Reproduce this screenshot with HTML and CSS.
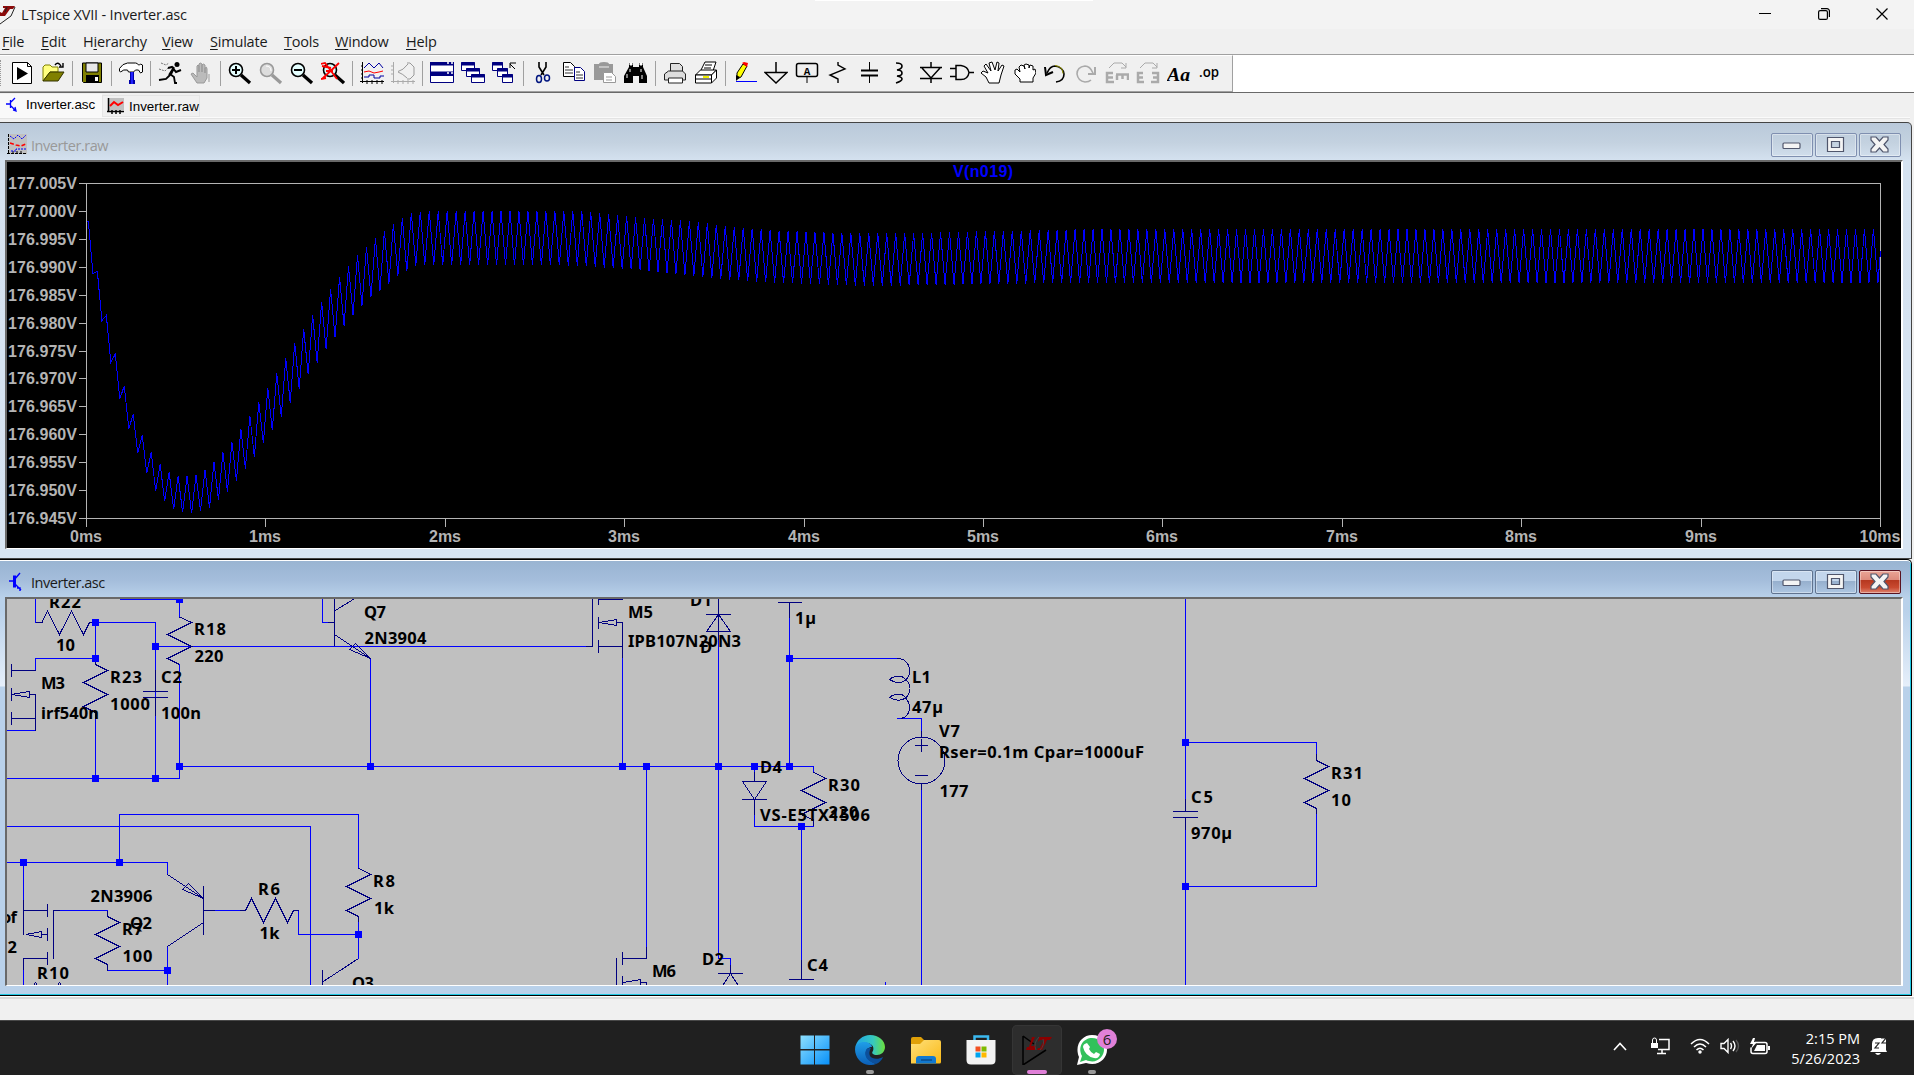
FILE: index.html
```html
<!DOCTYPE html>
<html lang="en">
<head>
<meta charset="utf-8">
<title>LTspice XVII - Inverter.asc</title>
<link rel="stylesheet" href="styles.css">
</head>
<body>
<header class="titlebar">
  <svg class="app-logo" width="17" height="22" viewBox="0 0 17 22"><path d="M3 3h12l-2 3h-3l-5 7H0V9l2 1 3-5H3z" fill="#8b0a0a"/><path d="M7 4 5 9M15 4l-4 9-11 8" fill="none" stroke="#222" stroke-width="1"/></svg>
  <span class="title-text">LTspice XVII - Inverter.asc</span>
  <div class="window-controls">
    <svg width="12" height="12" viewBox="0 0 12 12"><path d="M0 5.5h12" stroke="#000"/></svg>
    <svg width="12" height="12" viewBox="0 0 12 12" fill="none" stroke="#000" stroke-width="1.2"><rect x=".6" y="2.6" width="8.8" height="8.8" rx="1.5"/><path d="M3 .6h6a2.4 2.4 0 0 1 2.4 2.4v6"/></svg>
    <svg width="12" height="12" viewBox="0 0 12 12"><path d="M.5.5l11 11M11.5.5l-11 11" stroke="#000" stroke-width="1.2"/></svg>
  </div>
</header>
<nav class="menubar">
  <span><u>F</u>ile</span><span><u>E</u>dit</span><span>H<u>i</u>erarchy</span><span><u>V</u>iew</span><span><u>S</u>imulate</span><span><u>T</u>ools</span><span><u>W</u>indow</span><span><u>H</u>elp</span>
</nav>
<div class="toolbar-row">
  <div class="toolbar">
    <button><svg viewBox="0 0 24 24"><path d="M2.500 1.500h15l4 4v17h-19z" fill="#fff" stroke="#000"/><path d="M17.500 1.500v4h4" fill="none" stroke="#000"/><path d="M7 6v13l11-6.500z"/></svg></button>
    <button><svg viewBox="0 0 24 24"><path d="M2 20V6l2-2h5l2 2h6v5H9z" fill="#ffff80" stroke="#808000"/><path d="M2 20 9 11h14l-6 9z" fill="#808000" stroke="#333300"/><path d="M14 4q3-4 6 1M22 2v4h-4" fill="none" stroke="#000" stroke-width="1.400"/></svg></button>
    <i></i>
    <button><svg viewBox="0 0 24 24"><path d="M2.500 2h19v19.500h-18l-1-1z" fill="#808000" stroke="#000"/><path d="M6 2h12v9H6z" fill="#e8e8e8" stroke="#000"/><path d="M6 14h13v7H6z"/><path d="M15 16h3v4h-3z" fill="#fff"/></svg></button>
    <i></i>
    <button><svg viewBox="0 0 24 24"><path d="M.5 7.500q3-5 8-5.500h8q2 0 3 2h1l1-1 2 1v7l-2 1-2-3h-3l-2 2h-5l-1-2q-4-1-7 2l-1-1z" fill="#fff" stroke="#000"/><path d="M11 11h4v8h1v4h-6v-4h1z" fill="#00a"/><path d="M12 11h2v12h-2z" fill="#22f"/></svg></button>
    <i></i>
    <button><svg viewBox="0 0 24 24"><circle cx="19" cy="3.500" r="2.500"/><path d="M16 6l-5 8M12 13l4 3 1 6h2M12 14l-4 4-7 1" fill="none" stroke="#000" stroke-width="1.800"/><path d="M10 7l4-1 4 5 5-2M16 7l-3 6" fill="none" stroke="#000" stroke-width="2"/><path d="M3 2l5 2 3-2M1 8l6 2 3-3" fill="none" stroke="#777" stroke-dasharray="2 1"/></svg></button>
    <button><svg viewBox="0 0 24 24"><path d="M8 22 2 13l2-1 4 4V5q1-2 2 0v6-8q1-2 3 0v8-7q1-2 3 0v8-5q2-2 2 1v9l-3 5z" fill="#bbb" stroke="#999"/><path d="M20 13v8" stroke="#999"/></svg></button>
    <i></i>
    <button><svg viewBox="0 0 24 24"><circle cx="8" cy="9" r="6.500" fill="#e5ffff" stroke="#000" stroke-width="1.600"/><path d="M4 9h8M8 5v8" stroke="#000" stroke-width="2"/><path d="M13 14l9 8" stroke="#000" stroke-width="3.200"/></svg></button>
    <button><svg viewBox="0 0 24 24"><circle cx="8" cy="9" r="6.500" fill="#ddd" stroke="#999" stroke-width="1.600"/><path d="M7 5q5 0 5 5" fill="none" stroke="#fff"/><path d="M13 14l9 8" stroke="#999" stroke-width="3.200"/></svg></button>
    <button><svg viewBox="0 0 24 24"><circle cx="8" cy="9" r="6.500" fill="#e5ffff" stroke="#000" stroke-width="1.600"/><path d="M4 9h8" stroke="#000" stroke-width="2"/><path d="M13 14l9 8" stroke="#000" stroke-width="3.200"/></svg></button>
    <button><svg viewBox="0 0 24 24"><circle cx="9" cy="9" r="6.500" fill="#d8ffff" stroke="#000" stroke-width="1.600"/><path d="M14 14l9 8" stroke="#000" stroke-width="3.200"/><path d="M0 3l4-1 12 16M18 2 1 18M1 5l9 2M0 18l5-1M5 10h7" stroke="#f00" stroke-width="1.800" fill="none"/></svg></button>
    <i></i>
    <button><svg viewBox="0 0 24 24"><path d="M2.500 1v21M0 20.500h24M1 5h2M1 9h2M1 13h2M1 17h2M7 19v4M12 19v4M17 19v4M22 19v4" stroke="#000"/><path d="M4 7l5-5 5 5 5-5 4 5M4 16h5v-2h5v3h6v-2h4" fill="none" stroke="#0000a0"/><path d="M4 11l5-1 5 2 5-1 4-1" fill="none" stroke="#f00"/></svg></button>
    <button><svg viewBox="0 0 24 24" fill="none" stroke="#aaa"><path d="M2.500 1v21M0 20.500h24M0 5h3M0 9h3M0 13h3M7 19v4M12 19v4M17 19v4M22 19v4"/><path d="M7 10.500q5-1 10-7.500M7 11q5 2 9 6M16 2h3l4 4v8l-4 4h-3" stroke="#999"/></svg></button>
    <i></i>
    <button><svg viewBox="0 0 24 24"><path d="M.5 1.500h23v20H.5z" fill="#fff" stroke="#000080"/><path d="M0 1h24v3.500H0zM0 10.500h24V15H0z" fill="#000080"/><path d="M17 2h2M21 2h2M17 12h2M21 12h2" stroke="#fff" stroke-width="1.500"/></svg></button>
    <button><svg viewBox="0 0 24 24" fill="#fff" stroke="#000080"><path d="M.5 1.500h13v8H.5zM5.500 7.500h13v8h-13zM10.500 13.500h13v8h-13z"/><path d="M0 3h14M5 9h14M10 15h14" stroke-width="3"/></svg></button>
    <button><svg viewBox="0 0 24 24" fill="#fff" stroke="#000080"><path d="M.5 1.500h10v8H.5zM5.500 7.500h10v8h-10zM10.500 13.500h10v8h-10z"/><path d="M0 3h11M5 9h11M10 15h11" stroke-width="3"/><path d="M23 8l-5-5M18 7V2h6" fill="none" stroke="#000"/></svg></button>
    <i></i>
    <button><svg viewBox="0 0 24 24" fill="none"><path d="M8 1v5l5 8M15 1v5l-5 8" stroke="#000" stroke-width="1.600"/><ellipse cx="8" cy="18" rx="2.500" ry="3.500" stroke="#00157f" stroke-width="1.500"/><ellipse cx="16" cy="17" rx="2.500" ry="3" stroke="#00157f" stroke-width="1.500"/></svg></button>
    <button><svg viewBox="0 0 24 24" fill="#fff"><path d="M1.500 1.500h7l4 4v10h-11z" stroke="#000"/><path d="M12.500 6.500h6l4 4v9h-10z" stroke="#000080"/><path d="M3 6h4M3 9h8M3 12h8M14 11h4M14 14h7M14 17h7" stroke="#333"/></svg></button>
    <button><svg viewBox="0 0 24 24"><path d="M1 3h5q0-2 5-2t5 2h4v16H1z" fill="#999"/><path d="M6 6h10" stroke="#eee"/><path d="M10.500 11.500h8l4 4v6h-12z" fill="#fff" stroke="#999"/><path d="M13 16h6M13 19h6" stroke="#999"/></svg></button>
    <button><svg viewBox="0 0 24 24"><path d="M5 2h4v4h6V2h4v4l4 9v7h-8v-7H9v7H0v-7l5-9z"/><path d="M6 2h2v2H6zM16 2h2v2h-2zM3 13v4M6 8v3M17 8v3M18 14v4" stroke="#fff" fill="#fff"/></svg></button>
    <i></i>
    <button><svg viewBox="0 0 24 24" fill="#ddd" stroke="#222"><path d="M7.500 12V2.500h9l3 3V12"/><path d="M1.500 13l4-3h14l3 3v6h-21z"/><path d="M5.500 17h14v5h-14z" fill="#fff"/></svg></button>
    <button><svg viewBox="0 0 24 24" fill="#fff" stroke="#000"><path d="M7 9l4-8h11l-3 9M11 4h7M10 7h7"/><path d="M1.500 14l5-5h16l-5 5z"/><path d="M1.500 14h16v8h-16zM17.500 14l5-5v8l-5 5M2 18h15"/><path d="M9 16h6" stroke="#ee0" stroke-width="2"/></svg></button>
    <i></i>
    <button><svg viewBox="0 0 24 24"><path d="M4 12l6-9 4 2-6 11-4 2z" fill="#ff0" stroke="#000"/><path d="M9 2l2-1 4 1-1 4z" fill="#f00"/><path d="M3 14l4 2-4 4z"/><path d="M3 20.500h21" stroke="#00f"/></svg></button>
    <button><svg viewBox="0 0 24 24" fill="none" stroke="#000" stroke-width="1.500"><path d="M12 1v11M1 11.500h22L12 22z"/></svg></button>
    <button><svg viewBox="0 0 24 24"><rect x="1.500" y="2.500" width="21" height="13" rx="2" fill="none" stroke="#000" stroke-width="1.500"/><path d="M12 16v6" stroke="#000"/><text x="12" y="13.500" text-anchor="middle" class="glyph-label">A</text></svg></button>
    <button><svg viewBox="0 0 24 24" fill="none" stroke="#000" stroke-width="1.400"><path d="M12 1v3l7 4-15 6 8 4v4"/></svg></button>
    <button><svg viewBox="0 0 24 24" fill="none" stroke="#000"><path d="M12.500 1v8M12.500 15v7"/><path d="M4 9.500h17M4 14.500h17" stroke-width="2"/></svg></button>
    <button><svg viewBox="0 0 24 24" fill="none" stroke="#000" stroke-width="1.600"><path d="M8 2q6 0 6 3t-5 4q5 0 5 3t-5 3q5 1 5 3t-6 4"/></svg></button>
    <button><svg viewBox="0 0 24 24" fill="none" stroke="#000" stroke-width="1.500"><path d="M12 1v5M1 6.500h22M3 7l9 10 9-10M1 17.500h22M12 17v5"/></svg></button>
    <button><svg viewBox="0 0 24 24" fill="none" stroke="#000" stroke-width="1.500"><path d="M6 4.500h5q7 1 8 7-1 7-8 7H6zM0 7.500h6M0 15.500h6M19 11.500h5"/></svg></button>
    <button><svg viewBox="0 0 24 24"><path d="M8 22l-3-6-5-4 2-2 5 2-4-7 2-2 5 7-2-8 3-1 3 8 2-8 2 1-1 8 4-6 2 1-3 9-2 8z" fill="#fff" stroke="#000"/></svg></button>
    <button><svg viewBox="0 0 24 24"><path d="M8 21v-3l-5-5V9l2-1 3 3-1-5 2-2 3 1 1 3-1-4 2-1 3 1v3l1-3 3 1v4l2-1 1 4-3 5v4z" fill="#fff" stroke="#000"/></svg></button>
    <button><svg viewBox="0 0 24 24" fill="none"><path d="M4 12q3-7 8-7 8 1 9 8 0 7-8 8" stroke="#000" stroke-width="1.600"/><path d="M12 4.500q8 1 8 8" stroke="#990"/><path d="M2 6l1 8 7-3" stroke="#000" stroke-width="2"/></svg></button>
    <button><svg viewBox="0 0 24 24" fill="none" stroke="#aaa"><path d="M19 12q-3-7-8-7-8 1-8 8 1 7 8 8 4 0 6-2" stroke-width="1.600"/><path d="M21 6v7h-7" stroke-width="2"/></svg></button>
    <button><svg viewBox="0 0 24 24" fill="none" stroke="#aaa"><path d="M4 7l5-5h8l4 4M21 2v5h-5"/><path d="M8 12H2v9h7M2 16.500h6M11 13.500h13M12 19v-5M17.500 18v-4M23 19v-5" stroke-width="2.500"/></svg></button>
    <button><svg viewBox="0 0 24 24" fill="none" stroke="#aaa"><path d="M4 7l5-5h8l4 4M21 2v5h-5"/><path d="M7 12H2v9h6M2 16.500h5M16 12h6v9h-7M17 16.500h5" stroke-width="2.500"/></svg></button>
    <button><svg viewBox="0 0 24 24"><text x="0" y="19.500" textLength="23" lengthAdjust="spacingAndGlyphs" class="glyph-aa">Aa</text></svg></button>
    <button><svg viewBox="0 0 24 24"><text x="1" y="16" textLength="20" lengthAdjust="spacingAndGlyphs" class="glyph-op">.op</text></svg></button>
  </div>
</div>
<div class="tabs">
  <div class="tab tab-active"><svg width="16" height="16" viewBox="0 0 16 16"><path d="M1 8h5M5.500 4v8M6 6l4-4M6 10l4 4M8 14l3 1-1-4" stroke="#00f" stroke-width="1.300" fill="none"/></svg>Inverter.asc</div>
  <div class="tab"><svg width="17" height="16" viewBox="0 0 17 16"><path d="M2 0h15v12H2z" fill="#c0c0c0"/><path d="M1.500 0v14M0 13.500h17M5 12v4M9 12v4M13 12v4" stroke="#000" stroke-width="1.500"/><path d="M3 8l4-4 4 3 5-3" fill="none" stroke="#f00" stroke-width="2"/></svg>Inverter.raw</div>
</div>
<main class="mdi">
  <section class="doc doc-raw">
    <div class="doc-title">
      <svg width="20" height="21" viewBox="0 0 20 21"><path d="M2 0h18v20H2z" fill="#c0c0c0"/><path d="M1.500 0v20M0 19.500h19M6 17v3M10 17v3M14 17v3" stroke="#000" stroke-dasharray="3 1"/><path d="M3 2l4 3 4-4 4 4 4-4M4 17h5v-2h10" fill="none" stroke="#00f" stroke-dasharray="2 1"/><path d="M3 9l6 2 5 1 5-2" fill="none" stroke="#f00" stroke-width="1.500" stroke-dasharray="4 2"/></svg>
      <span>Inverter.raw</span>
      <div class="doc-buttons"><b><svg viewBox="0 0 42 24"><rect x="12" y="10" width="17" height="5.500" rx="1"/></svg></b><b><svg viewBox="0 0 42 24"><path d="M12.500 4.500h16v14h-16zM16.500 8.500v6h8v-6z" fill-rule="evenodd"/></svg></b><b class="close"><svg viewBox="0 0 42 24"><path d="M12 4h5l3.500 4L24 4h5v3l-4 4.500 4 4.500v3h-5l-3.500-4-3.500 4h-5v-3l4-4.500L12 7z"/></svg></b></div>
    </div>
    <div class="client plot">
      <svg id="plot" viewBox="7 162 1894 386" width="1894" height="386">
        <text class="trace-name" x="953" y="177" textLength="60">V(n019)</text>
        <g id="axes" class="axes"></g>
        <path id="trace" class="trace"/>
      </svg>
    </div>
  </section>
  <section class="doc doc-asc">
    <div class="doc-title">
      <svg width="20" height="21" viewBox="0 0 20 21"><path d="M2 10h5M7 9l6-7M7 12l7 7M10 17h3v3" stroke="#00f" stroke-width="1.400" fill="none"/><path d="M7.500 4.500v12" stroke="#00f" stroke-width="3"/></svg>
      <span>Inverter.asc</span>
      <div class="doc-buttons"><b><svg viewBox="0 0 42 24"><rect x="12" y="10" width="17" height="5.500" rx="1"/></svg></b><b><svg viewBox="0 0 42 24"><path d="M12.500 4.500h16v14h-16zM16.500 8.500v6h8v-6z" fill-rule="evenodd"/></svg></b><b class="close"><svg viewBox="0 0 42 24"><path d="M12 4h5l3.500 4L24 4h5v3l-4 4.500 4 4.500v3h-5l-3.500-4-3.500 4h-5v-3l4-4.500L12 7z"/></svg></b></div>
    </div>
    <div class="client schematic">
      <svg viewBox="7 599 1894 386" width="1894" height="386">
        <g class="wires">
          <path d="M35.500 599V622.500M95.500 622.500H155.500V778.500M95.500 622.500V658.500H35.500V670M7 730.500H35.500M95.500 712V778.500M7 778.500H179.500V664M119.500 599.500H179.500V617M155.500 646.500H586M179.500 766.500H813.500V772M322.500 599V622.500H328M370.500 658.500V766.500"/>
          <path d="M119.500 862.500V814.500H358.500V868M7 826.500H310.500V985M7 862.500H167.500V874M23.500 862.500V900M60 910.500H107.500M107.500 970.500H167.500M167.500 946.500V985M215 910.500H240M298.500 910.500V934.500H358.500M358.500 922V958.500M23.500 970V985"/>
          <path d="M622.500 658V766.500M646.500 766.500V947M718.500 640V958.500H730.500V965M789.500 618V766.500M789.500 658.500H897M897 718.500H921.500V731M921.500 790V985M754.500 766.500V772M754.500 815V826.500H813.500M801.500 826.500V960M885.500 982V985"/>
          <path d="M1185.500 599V799M1185.500 830V985M1185.500 742.500H1316.500V754M1316.500 814V886.500H1185.500"/>
        </g>
        <g class="parts">
          <path d="M35.500 622.500H42L47.500 611 59.500 634.500 71.500 611 83.500 634.500 89.500 622.500H95.500M35.500 670.500H11.500M11.500 664V677M11.500 688V701M11.500 712V725M11.500 694.500L29.500 691.500V697.500ZM29.500 694.500H35.500V730.500M11.500 718.500H35.500"/>
          <path d="M95.500 658.500V664.500L107.500 670.500 83.500 682.500 107.500 694.500 83.500 706.500 95.500 712.500M155.500 670V691.500M143 691.500H168M143 697.500H168M155.500 697.500V716M179.500 617L191.500 622.500 167.500 634.500 191.500 646.500 167.500 658.500 179.500 664.500"/>
          <path d="M328 622.500H334.500M334.500 599V646M334.500 611L354 599M334.500 634.500L370.500 658.500M370.500 658.500L349.500 649.500 355.500 643.500Z"/>
          <path d="M358.500 868L370.500 874.500 346.500 886.500 370.500 898.500 346.500 910.500 358.500 916.500V922M358.500 958.500L322.500 982M322.500 970V985M167.500 874.500L203.500 898.500 182.500 889.500 188.500 883.500 203.500 898.500M203.500 886V935M203.500 922.500L167.500 946.500M203.500 910.500H215M240 910.500H245.500L251.500 898.500 263.500 922.500 275.500 898.500 287.500 922.500 293.500 910.500H298.500"/>
          <path d="M23.500 900V934.500M23.500 910.500H47.500M47.500 904V917M47.500 928V941M47.500 952V965M53.500 959V910.500H60M26 934.500L41.500 931.500V937.500ZM41.500 934.500H47.500M47.500 958.500H23.500V970M107.500 910.500V916.500L119.500 922.500 95.500 934.500 119.500 946.500 95.500 958.500 107.500 964.500V970.500M34 985L35.500 982.500 37 985M58 985L59.500 982.500 61 985"/>
          <path d="M586 646.500H592.500V599M598.500 599V605M598.500 617V629M598.500 640V653M598.500 599.500H622.500M599 622.500L616.500 619.500V625.500ZM616.500 622.500H622.500V658M598.500 646.500H622.500M718.500 599V640M706 614.500H731M718.500 614.500L706.500 631.500H730.500ZM778 602.500H802M789.500 602V618"/>
          <path d="M897 658.500C907 658 910 667 909.500 671C909.500 676 907 679 905.500 680C900 685 894 682 889.500 679.500C895 675 902 675 905.500 679.500C912 685 911 693 905.500 698C900 702 894 700 889.500 697.500C895 693 902 693 905.500 697.500C913 707 909 717 901 718.500M921.500 731V737M921.500 783V790M915 745.500H928M921.500 739V752M915 775.500H928"/>
          <circle cx="921.500" cy="760.500" r="23.500"/>
          <path d="M813.500 772L825.500 778.500 801.500 790.500 825.500 802.500 801.500 814.500 813.500 820V826M754.500 772V781.500M742.500 781.500H766.500L754.500 799.500ZM742 799.500H767M754.500 799V815M801.500 960V979.500M789 979.500H814M646.500 947V958.500H622.500M622.500 952V965M616.500 958V985M622.500 976V985M623 982.500L640.500 979.500V985M640.500 982.500H646.500V985M730.500 965V973.500M718 973.500H743M723 985L730.500 973.500 738 985"/>
          <path d="M1185.500 799V811.500M1173 811.500H1198M1173 817.500H1198M1185.500 817.500V830M1316.500 754V760.500L1328.500 766.500 1304.500 778.500 1328.500 790.500 1304.500 802.500 1316.500 808.500V814"/>
        </g>
        <path class="nodes" d="M95.500 622.500h0M155.500 646.500h0M95.500 658.500h0M179.500 599.500h0M95.500 778.500h0M155.500 778.500h0M179.500 766.500h0M370.500 766.500h0M622.500 766.500h0M646.500 766.500h0M718.500 766.500h0M754.500 766.500h0M789.500 766.500h0M789.500 658.500h0M801.500 826.500h0M23.500 862.500h0M119.500 862.500h0M358.500 934.500h0M167.500 970.500h0M1185.500 742.500h0M1185.500 886.500h0"/>
        <g class="labels">
          <text x="49" y="608" textLength="32">R22</text><text x="56" y="651" textLength="19">10</text><text x="194" y="635" textLength="32">R18</text><text x="194.500" y="662" textLength="29">220</text>
          <text x="41" y="689" textLength="24">M3</text><text x="41" y="719" textLength="58">irf540n</text><text x="110" y="683" textLength="32">R23</text><text x="110" y="710" textLength="40">1000</text><text x="161" y="683" textLength="21">C2</text><text x="161" y="719" textLength="40">100n</text>
          <text x="364" y="618" textLength="22">Q7</text><text x="364.500" y="644" textLength="62">2N3904</text><text x="90.500" y="902" textLength="62">2N3906</text><text x="130" y="929" textLength="22">Q2</text><text x="122" y="935" textLength="21">R7</text><text x="122.500" y="961.500" textLength="30">100</text>
          <text x="37" y="979" textLength="32">R10</text><text x="258" y="895" textLength="22">R6</text><text x="259.500" y="939" textLength="20">1k</text><text x="373" y="887" textLength="22">R8</text><text x="374" y="914" textLength="20">1k</text><text x="352" y="989" textLength="22">Q3</text><text x="1" y="922.500" textLength="16">of</text><text x="7.500" y="953" textLength="10">2</text>
          <text x="628" y="618" textLength="25">M5</text><text x="628" y="647" textLength="113">IPB107N20N3</text><text x="690" y="606" textLength="22">D1</text><text x="700" y="653" textLength="12">D</text><text x="795" y="624" textLength="21">1µ</text><text x="912" y="683" textLength="19">L1</text><text x="912" y="713" textLength="31">47µ</text><text x="939" y="737" textLength="21">V7</text><text x="939" y="758" textLength="205">Rser=0.1m Cpar=1000uF</text><text x="939.500" y="797" textLength="29">177</text>
          <text x="760" y="773" textLength="22">D4</text><text x="828" y="791" textLength="32">R30</text><text x="760" y="821" textLength="110">VS-E5TX1506</text><text x="828.500" y="818" textLength="30">220</text><text x="652" y="977" textLength="24">M6</text><text x="702" y="965" textLength="22">D2</text><text x="807" y="971" textLength="21">C4</text>
          <text x="1191" y="803" textLength="22">C5</text><text x="1191" y="839" textLength="41">970µ</text><text x="1331" y="779" textLength="32">R31</text><text x="1331" y="806" textLength="20">10</text>
        </g>
      </svg>
    </div>
  </section>
</main>
<div class="statusbar"></div>
<footer class="taskbar">
  <div class="dock">
    <div class="app"><svg width="30" height="30" viewBox="0 0 30 30"><defs><linearGradient id="win" x2="1" y2="1"><stop stop-color="#8de0ff"/><stop offset="1" stop-color="#0890f8"/></linearGradient></defs><path d="M.5.5H14V14H.5zM15 .5h14.500V14H15zM.5 15.500H14V29.500H.5zM15 15.500h14.500v14H15z" fill="url(#win)"/></svg></div>
    <div class="app running"><svg width="30" height="30" viewBox="0 0 30 30"><defs><linearGradient id="e1" x2="1"><stop stop-color="#1fa4e8"/><stop offset=".6" stop-color="#36c8c0"/><stop offset="1" stop-color="#6be03c"/></linearGradient><linearGradient id="e2" y2="1" x2="0"><stop stop-color="#1f9ee8"/><stop offset="1" stop-color="#0b5fb8"/></linearGradient></defs><path d="M0 14C1 5 8 0 15 0c9 0 15 6 15 12 0 5-4 8-8 8-4 0-6-2-4-4 2-5-3-9-9-8-5 0-8 3-9 6z" fill="url(#e1)"/><path d="M0 14c1-5 5-7 9-7 4 0 8 2 8 5-4 0-7 3-6 8 1 5 6 7 10 9-11 4-21-4-21-15z" fill="url(#e2)"/><path d="M11 15c-3 7 3 12 10 14 3-1 6-4 7-7-5 3-11 2-13-1-1-2-1-5 1-8-2 0-4 0-5 2z" fill="#0c509c"/></svg></div>
    <div class="app"><svg width="30" height="30" viewBox="0 0 30 30"><defs><linearGradient id="fd" x2="1" y2="1"><stop stop-color="#ffe07a"/><stop offset="1" stop-color="#f9b916"/></linearGradient></defs><path d="M0 4q0-2 2-2h8l3 3v5H0z" fill="#e0a008"/><path d="M0 9h9l4-4h15q2 0 2 2v20q0 1.500-1.500 1.500H0z" fill="url(#fd)"/><path d="M5 28.500V24q0-3 3-3h14q3 0 3 3v4.500z" fill="#1279cf"/><path d="M10 25h11" stroke="#0b4d8c" stroke-width="1.500"/></svg></div>
    <div class="app"><svg width="30" height="30" viewBox="0 0 30 30"><path d="M8.500 7V1.500h13.500V7" fill="none" stroke="#3bb9f0" stroke-width="2.500"/><path d="M.5 5h29v20q0 4.500-4.500 4.500H5q-4.500 0-4.500-4.500z" fill="#f3f3f3"/><path d="M9.500 11.500h5v5h-5z" fill="#f25022"/><path d="M15.500 11.500h5v5h-5z" fill="#7fba00"/><path d="M9.500 17.500h5v5h-5z" fill="#00a4ef"/><path d="M15.500 17.500h5v5h-5z" fill="#ffb900"/></svg></div>
    <div class="app running current"><svg width="30" height="30" viewBox="0 0 30 30"><path d="M1 1v29l23-15M1 1l11 8" fill="none" stroke="#000" stroke-width="1.500"/><path d="M10 2h3L9 11h3l2-2-1 6H4l1-3h2zM17 2h13l-2 3h-3l-5 10h-5l1-2h2l4-8h-4l-2 2z" fill="#8b0000"/><path d="M17 2q-6 6-3 13M21 4q2 6-3 11" fill="none" stroke="#444"/></svg></div>
    <div class="app running"><svg width="30" height="30" viewBox="0 0 30 30"><path d="M0 30l2-8C-3 10 5 0 15 0s15 7 15 15-8 17-21 13z" fill="#fff"/><path d="M3 27l2-6C0 11 7 3 15 3s12 6 12 12-7 15-18 10z" fill="#32c15b"/><path d="M10 8l3 4-1 2q2 4 5 5l2-2 4 2q-1 5-6 4-9-2-11-11 0-3 4-4z" fill="#fff"/></svg><span class="badge">6</span></div>
  </div>
  <div class="tray">
    <svg width="14" height="9" viewBox="0 0 14 9"><path d="M1 8l6-6.500L13 8" fill="none" stroke="#fff" stroke-width="1.600"/></svg>
    <svg width="20" height="18" viewBox="0 0 20 18"><path d="M8 2.500h10v10H7M11 12v4M6 16.500h9" fill="none" stroke="#fff" stroke-width="1.500"/><path d="M0 6h7v5H0z" fill="#fff"/><path d="M1.500 6V3q0-2 2-2t2 2v3" fill="none" stroke="#fff"/></svg>
    <svg width="20" height="16" viewBox="0 0 20 16" fill="none" stroke="#fff" stroke-width="1.500"><path d="M1 6q9-9 18 0M4 9q6-6 12 0M6.500 12q3.500-3.500 7 0"/><circle cx="10" cy="14" r="1" fill="#fff"/></svg>
    <svg width="20" height="16" viewBox="0 0 20 16" fill="none" stroke="#fff" stroke-width="1.400"><path d="M1 5.500h3l4-4v13l-4-4H1zM10.500 5q2 3 0 6M13 3q4 5 0 10"/><path d="M16 2q5 6 0 12" stroke="#555"/></svg>
    <svg width="20" height="17" viewBox="0 0 20 17"><path d="M5 4.500h10q2 0 2 2v7q0 2-2 2H3q-2 0-2-2v-4" fill="none" stroke="#fff" stroke-width="1.500"/><path d="M7 7h8v6H4zM18 8h2v4h-2zM3 0L0 6h3L1 11l6-7H4L5 0z" fill="#fff"/></svg>
    <div class="clock"><span>2:15 PM</span><span>5/26/2023</span></div>
    <svg width="18" height="20" viewBox="0 0 18 20"><path d="M2 14V8q0-6 6-6h8v12l1 2H0zM5 17h6q-3 4-6 0z" fill="#fff"/><path d="M5 7h4l-4 5h4M11 2h5l-4 5h5" fill="none" stroke="#222" stroke-width="1.200"/></svg>
  </div>
</footer>
<script src="plot.js"></script>
</body>
</html>
```
FILE: styles.css
```css
* { box-sizing: border-box; }
body { margin: 0; width: 1914px; height: 1075px; overflow: hidden; display: flex; flex-direction: column; background: #f0f0f0; font-family: "Open Sans", "Noto Sans", sans-serif; font-size: 14.5px; color: #1a1a1a; }
svg { display: block; flex: none; }
.titlebar { height: 29px; padding-bottom: 1px; background: linear-gradient(#fff, #fff) 815px 0 / 278px 1px no-repeat #f3f3f3; display: flex; align-items: center; }
.app-logo { width: 17px; }
.title-text { margin-left: 4px; letter-spacing: -0.17px; white-space: nowrap; }
.window-controls { margin-left: auto; margin-right: 26px; display: flex; gap: 46.5px; }
.menubar { height: 26px; padding-left: 2px; border-bottom: 1px solid #a0a0a0; display: grid; grid-template-columns: 39px 42px 79px 48px 74px 51px 71px 40px; line-height: 25px; letter-spacing: -0.2px; }
.menubar u { text-underline-offset: 2px; }
.toolbar-row { height: 38px; background: #fff; border-bottom: 1px solid #696969; }
.toolbar { width: 1233px; height: 37px; padding-left: 6px; padding-bottom: 1px; background: #f0f0f0; border-top: 1px solid #fff; border-right: 1px solid #a0a0a0; border-bottom: 1px solid #a0a0a0; display: flex; align-items: center; }
.toolbar::before { content: ""; width: 1px; height: 26px; margin-left: -6px; margin-right: 5px; border-left: 1px dotted #999; }
.toolbar button { border: 0; background: none; padding: 0 4px 0 3px; width: 31px; height: 24px; }
.toolbar button svg { width: 24px; height: 24px; }
.toolbar i { width: 8px; height: 25px; flex: none; background: linear-gradient(#a0a0a0, #a0a0a0) 3px 0 / 1px 100% no-repeat; }
.glyph-label { font: bold 11px "Liberation Mono", monospace; }
.glyph-aa { font: italic bold 19px "Liberation Serif", serif; }
.glyph-op { font: 600 15px "Open Sans", sans-serif; }
.tabs { height: 29px; padding-top: 1px; display: flex; align-items: flex-start; font: 13.4px "Liberation Sans", Arial, sans-serif; color: #000; background: linear-gradient(#fafafa, #fafafa) 0 24px / 1910px 1px no-repeat, linear-gradient(#e3e3e3, #e3e3e3) 0 25px / 1910px 1px no-repeat; }
.tab { height: 22px; margin-top: 1px; width: 98px; padding-left: 4px; border: 1px solid #e5e5e5; display: flex; align-items: center; gap: 5px; white-space: nowrap; }
.tab-active { width: 102px; height: 23px; margin-top: 0; padding: 0 0 3px 5px; background: #f9f9f9; border: 0; }
.mdi { height: 874px; width: 1912px; display: flex; flex-direction: column; }
.doc { height: 437px; padding: 0 9px 0 5px; border: 1px solid #444; border-left: 0; border-top-right-radius: 5px; display: flex; flex-direction: column; }
.doc-raw { background: linear-gradient(#bac9da, #c4d2e0 20px, #d5e2f0 38px, #d7e4f2); }
.doc-asc { border-color: #000; box-shadow: inset 0 1px #fff, inset -1px -1px #1fc8e3; background: linear-gradient(#99b4d1, #a4bddb 20px, #b9d1ea 38px, #b9d1ea 50px, #e6effa 126px, #b9d1ea 127px); }
.doc-title { height: 37px; flex: none; display: flex; align-items: center; padding: 0 1px 0 2px; letter-spacing: -0.45px; }
.doc-raw .doc-title > span { color: #999; }
.doc-title > svg { margin-top: 6px; }
.doc-title > span { margin-left: 4px; margin-top: 7px; }
.doc-buttons { margin-left: auto; margin-top: 7px; display: flex; gap: 2px; }
.doc-buttons b { width: 42px; height: 24px; border: 1px solid #7f8fb0; border-radius: 2px; box-shadow: inset 0 0 0 1px #ffffff60; }
.doc-buttons svg { width: 42px; height: 24px; margin: -1px; fill: #f4f4f4; stroke: #50566c; stroke-width: 1.2; }
.doc-asc .doc-buttons b { background: linear-gradient(#c3d6ec 45%, #96afcd 46%, #adc6e2); border-color: #60738f; }
.doc-asc .doc-buttons .close { background: linear-gradient(#eaa596, #dc8a7b 42%, #b63820 43%, #c94a30 75%, #dd8370); border-color: #591220; }
.client { width: 1898px; height: 389px; border: 2px solid #fff; border-top-color: #696969; border-left-color: #696969; border-bottom-width: 1px; border-right-width: 2px; flex: none; overflow: hidden; }
.client svg { overflow: hidden; }
.plot { background: #000; }
.schematic { background: #c0c0c0; }
.axes { fill: none; stroke: #c0c0c0; shape-rendering: crispEdges; }
.axes text, .trace-name { font: bold 16px "Liberation Sans", Arial, sans-serif; fill: #b4b4b4; stroke: none; }
.axes path { stroke: #b4b4b4; }
.trace-name { fill: #00f; }
.trace { fill: none; stroke: #00f; stroke-width: 1; shape-rendering: crispEdges; }
.wires, .parts { fill: none; stroke: #00f; shape-rendering: crispEdges; }
.parts { stroke: #000080; }
.nodes { stroke: #00f; stroke-width: 7; stroke-linecap: square; shape-rendering: crispEdges; }
.labels { font: bold 16.5px "Noto Sans", sans-serif; fill: #000; }
.statusbar { height: 24px; border-top: 1px solid #fff; box-shadow: inset 0 2px #d9d9d9; }
.taskbar { height: 55px; background: #202020; border-top: 1px solid #484848; display: grid; grid-template-columns: 790px 1fr auto; color: #fff; }
.dock { grid-column: 2; display: flex; gap: 5.4px; padding-top: 4px; }
.app { position: relative; width: 50px; height: 50px; border-radius: 5px; display: flex; align-items: center; justify-content: center; }
.running::after { content: ""; position: absolute; bottom: 1px; left: 21px; width: 8px; height: 4px; border-radius: 2px; background: #999; }
.current { background: #2d2d2d; box-shadow: inset 0 0 0 1px #353535; }
.current::after { left: 15px; width: 20px; background: #e080d8; }
.badge { position: absolute; left: 30px; top: 4px; width: 20px; height: 20px; border-radius: 50%; background: #e080d8; color: #222; line-height: 20px; text-align: center; font-size: 15px; }
.tray { display: flex; align-items: center; margin-right: 26px; padding-bottom: 4px; }
.tray > svg:nth-child(2) { margin-left: 24px; }
.tray > svg:nth-child(3) { margin-left: 19px; }
.tray > svg:nth-child(4), .tray > svg:nth-child(5) { margin-left: 10px; }
.clock { width: 90px; display: flex; flex-direction: column; text-align: right; line-height: 20px; font-size: 14.5px; letter-spacing: 0; padding-top: 6px; }
.clock + svg { margin-left: 10px; }
```
FILE: plot.js
```js
// Draws the axes and the V(n019) waveform: a 20 kHz ripple between two envelopes.
(() => {
  const left = 86.5, right = 1880.5, top = 183.5, bottom = 518.5;
  const axes = document.getElementById('axes');
  let grid = `M${left} ${bottom + 8}V${top}H${right}V${bottom + 8}`;
  let labels = '';
  for (let i = 0; i <= 12; i++) {
    const y = Math.floor(top + (bottom - top) * i / 12) + 0.5;
    grid += `M${left - 8} ${y}H${i === 12 ? right : left}`;
    labels += `<text x="8" y="${y + 5.5}" textLength="69">${(177.005 - i * 0.005).toFixed(3)}V</text>`;
  }
  for (let i = 0; i <= 10; i++) {
    const x = Math.floor(left + (right - left) * i / 10) + 0.5;
    grid += `M${x} ${bottom}V${bottom + 8}`;
    labels += `<text x="${x - 0.5}" y="542" text-anchor="middle">${i}ms</text>`;
  }
  axes.innerHTML = `<path d="${grid}"/>` + labels;

  const peaks = [221.3, 271.3, 315.3, 354, 386, 414.3, 435.3, 452.3, 464.3, 472.3, 476, 476, 475, 470, 462, 452.3, 442, 429.3, 416, 402, 388, 373.3, 358, 343, 329, 315, 302, 289, 277.3, 266.3, 255.3, 247.3, 238, 231, 224, 218, 213, 211.7, 211];
  const troughs = [273.7, 320.7, 362.3, 398.7, 428.7, 453.3, 473.3, 490.7, 501.3, 509.3, 512.3, 513.3, 510.7, 507.7, 499.7, 491.7, 480.7, 468.7, 456.7, 443, 430.3, 416.7, 402.7, 388.7, 374.3, 362.7, 349.3, 337.3, 325.7, 315.3, 305.7, 296.7, 290.7, 283.7, 275.7, 271.3, 265.7, 265];
  const upper = [[429, 211], [585, 211], [600, 213.5], [635, 217.5], [696, 221.5], [732, 227], [781, 231], [854, 233.5], [903, 233.5], [977, 231.5], [1074, 229.5], [1150, 229], [1900, 229]];
  const lower = [[429, 265], [577, 265.5], [604, 267.5], [640, 270], [696, 276], [732, 280], [781, 283], [854, 285.5], [903, 285.5], [977, 284], [1074, 283], [1900, 283]];
  function at(points, x) {
    for (let i = 1; i < points.length; i++) {
      if (x <= points[i][0]) {
        const [x0, y0] = points[i - 1], [x1, y1] = points[i];
        return y0 + (y1 - y0) * (x - x0) / (x1 - x0);
      }
    }
    return points[points.length - 1][1];
  }
  let d = `M${left} 221.3`;
  for (let k = 0; k < 200; k++) {
    const xp = 88.4 + 8.97 * k, xt = 92.9 + 8.97 * k;
    d += `L${xp.toFixed(2)} ${k < peaks.length ? peaks[k] : at(upper, xp).toFixed(1)}`;
    d += `L${xt.toFixed(2)} ${k < troughs.length ? troughs[k] : at(lower, xt).toFixed(1)}`;
  }
  d += `L${right} 251`;
  document.getElementById('trace').setAttribute('d', d);
})();
```
